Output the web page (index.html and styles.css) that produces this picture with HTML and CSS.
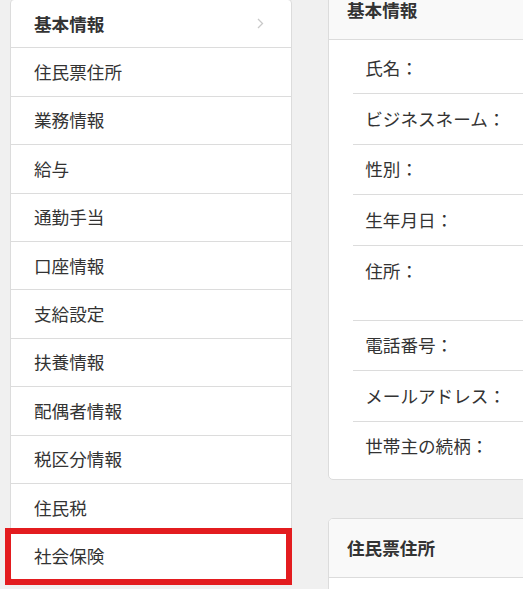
FILE: index.html
```html
<!DOCTYPE html>
<html lang="ja">
<head>
<meta charset="utf-8">
<title>基本情報</title>
<link rel="stylesheet" href="styles.css">
</head>
<body>
<div class="page">
  <nav class="side">
    <ul class="menu">
      <li class="menu-item active"><span>基本情報</span>
        <svg class="chev" width="7" height="11" viewBox="0 0 7 11"><path d="M1 1 L5.5 5.5 L1 10" fill="none" stroke="#c9c9c9" stroke-width="1.3"/></svg>
      </li>
      <li class="menu-item">住民票住所</li>
      <li class="menu-item">業務情報</li>
      <li class="menu-item">給与</li>
      <li class="menu-item">通勤手当</li>
      <li class="menu-item">口座情報</li>
      <li class="menu-item">支給設定</li>
      <li class="menu-item">扶養情報</li>
      <li class="menu-item">配偶者情報</li>
      <li class="menu-item">税区分情報</li>
      <li class="menu-item">住民税</li>
      <li class="menu-item highlight">社会保険</li>
    </ul>
  </nav>
  <main class="content">
    <section class="card">
      <h2 class="card-head">基本情報</h2>
      <ul class="fields">
        <li class="field">氏名：</li>
        <li class="field">ビジネスネーム：</li>
        <li class="field">性別：</li>
        <li class="field">生年月日：</li>
        <li class="field tall">住所：</li>
        <li class="field">電話番号：</li>
        <li class="field">メールアドレス：</li>
        <li class="field last">世帯主の続柄：</li>
      </ul>
    </section>
    <section class="card">
      <h2 class="card-head">住民票住所</h2>
      <div class="card-body"></div>
    </section>
  </main>
</div>
</body>
</html>
```

FILE: styles.css
```css
html, body {
  margin: 0;
  padding: 0;
  overflow: hidden;
}
body {
  background: #f0f0f0;
  font-family: "Noto Sans CJK JP", "Noto Sans", sans-serif;
  font-size: 17.6px;
  color: #333;
  width: 523px;
  height: 589px;
}
.page {
  display: flex;
  align-items: flex-start;
  gap: 36px;
  padding-left: 10px;
  margin-top: -20.2px;
}
.side {
  flex: none;
  width: 282px;
  margin-top: 19.2px;
}
.menu {
  list-style: none;
  margin: 0;
  padding: 0;
  background: #fff;
  border: 1px solid #dcdcdc;
  border-radius: 4px;
}
.menu-item {
  position: relative;
  display: flex;
  align-items: center;
  justify-content: space-between;
  padding: 11.6px 27px 11.6px 23px;
  line-height: 24.2px;
  border-bottom: 1px solid #dcdcdc;
}
.menu-item:last-child {
  border-bottom: 0;
}
.menu-item.active {
  font-weight: bold;
}
.chev {
  display: block;
}
.highlight::after {
  content: "";
  position: absolute;
  top: -4px;
  left: -6px;
  right: -1px;
  bottom: -5.5px;
  border: 6px solid #e31c1f;
}
.content {
  flex: none;
  width: 420px;
  display: flex;
  flex-direction: column;
  gap: 38px;
}
.card {
  background: #fff;
  border: 1px solid #dcdcdc;
  border-radius: 5px;
  overflow: hidden;
}
.card-head {
  margin: 0;
  padding: 17px 18px;
  font-size: 17.6px;
  line-height: 24.2px;
  font-weight: bold;
  background: #f9f9f9;
  border-bottom: 1px solid #dcdcdc;
}
.card-body {
  height: 60px;
}
.fields {
  list-style: none;
  margin: 0 0 0 24.2px;
  padding: 3.5px 0 7.5px;
}
.field {
  padding: 12.7px 12px;
  line-height: 24.2px;
  border-bottom: 1px solid #dcdcdc;
}
.field.tall {
  min-height: 48.4px;
}
.field.last {
  border-bottom: 0;
}
```
